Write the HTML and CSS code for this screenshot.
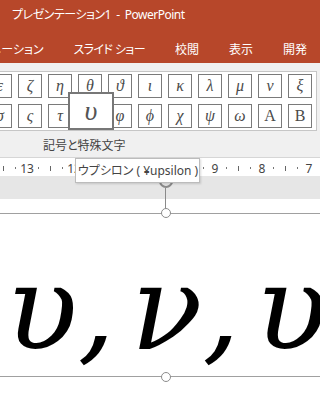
FILE: index.html
```html
<!DOCTYPE html>
<html lang="ja">
<head>
  <meta charset="UTF-8">
  <meta name="viewport" content="width=device-width, initial-scale=1.0">
  <title>プレゼンテーション1 - PowerPoint</title>
  <link rel="stylesheet" href="styles.css">
</head>
<body>
  <div class="titlebar">
    <div class="title">プレゼンテーション1&nbsp; - &nbsp;PowerPoint</div>
    <div class="tabs">
      <span>アニメーション</span>
      <span>スライド ショー</span>
      <span>校閲</span>
      <span>表示</span>
      <span>開発</span>
    </div>
  </div>

  <div class="ribbon">
    <div class="gallery">
      <div class="symbols">
        <span class="sym">ε</span>
        <span class="sym">ζ</span>
        <span class="sym">η</span>
        <span class="sym">θ</span>
        <span class="sym">ϑ</span>
        <span class="sym">ι</span>
        <span class="sym">κ</span>
        <span class="sym">λ</span>
        <span class="sym">μ</span>
        <span class="sym">ν</span>
        <span class="sym">ξ</span>

        <span class="sym">σ</span>
        <span class="sym">ς</span>
        <span class="sym">τ</span>
        <span class="sym">υ</span>
        <span class="sym">φ</span>
        <span class="sym">ϕ</span>
        <span class="sym">χ</span>
        <span class="sym">ψ</span>
        <span class="sym">ω</span>
        <span class="sym up">Α</span>
        <span class="sym up">Β</span>
      </div>
      <div class="sym-hover">υ</div>
    </div>
    <div class="group-label">記号と特殊文字</div>
  </div>

  <div class="ruler">
    <span class="tick"></span><span class="dot"></span><span class="num">13</span><span class="dot"></span>
    <span class="tick"></span><span class="dot"></span><span class="num">12</span><span class="dot"></span>
    <span class="tick"></span><span class="dot"></span><span class="num">11</span><span class="dot"></span>
    <span class="tick"></span><span class="dot"></span><span class="num">10</span><span class="dot"></span>
    <span class="tick"></span><span class="dot"></span><span class="num">9</span><span class="dot"></span>
    <span class="tick"></span><span class="dot"></span><span class="num">8</span><span class="dot"></span>
    <span class="tick"></span><span class="dot"></span><span class="num">7</span><span class="dot"></span>
  </div>

  <div class="canvas-top">
    <svg class="rotate" width="18" height="16" viewBox="0 0 18 16">
      <path d="M3 6 A6 6 0 1 0 15 6" fill="none" stroke="#8a8a8a" stroke-width="2"/>
      <path d="M13 4 L17 5 L15 8" fill="none" stroke="#8a8a8a" stroke-width="1.5"/>
    </svg>
    <div class="rotate-stem"></div>
  </div>

  <div class="slide">
    <div class="textbox">
      <span class="handle handle-top"></span>
      <div class="math">υ, ν, υ</div>
      <span class="handle handle-bottom"></span>
    </div>
  </div>

  <div class="tooltip">ウプシロン ( ¥upsilon )</div>
</body>
</html>
```

FILE: styles.css
```css
body {
  margin: 0;
  width: 320px;
  height: 400px;
  overflow: hidden;
  position: relative;
  font-family: "Noto Sans", "Noto Sans CJK JP", sans-serif;
  font-feature-settings: "palt";
  background: #fff;
}
.titlebar {
  background: #B7472A;
  color: #fff;
  height: 63px;
  font-size: 12px;
}
.title {
  height: 30px;
  line-height: 30px;
  padding-left: 12px;
  letter-spacing: -0.5px;
  white-space: nowrap;
}
.tabs {
  display: flex;
  justify-content: flex-end;
  align-items: center;
  gap: 30px;
  height: 28px;
  padding-top: 5px;
  padding-right: 13px;
  white-space: nowrap;
}
.tabs span:nth-child(2) {
  letter-spacing: -0.6px;
}
.ribbon {
  background: #f0f0f0;
  padding-top: 8px;
  border-bottom: 1px solid #d6d6d6;
}
.gallery {
  position: relative;
  margin-left: -20px;
  width: 337px;
  box-sizing: border-box;
  background: #fff;
  border: 1px solid #c6c6c6;
  padding: 2px 0 2px 7px;
}
.symbols {
  display: grid;
  grid-template-columns: repeat(11, 24px);
  gap: 6px;
}
.sym {
  box-sizing: border-box;
  width: 24px;
  height: 24px;
  border: 1px solid #7a7a7a;
  display: flex;
  align-items: center;
  justify-content: center;
  font-family: "Liberation Serif", serif;
  font-style: italic;
  font-size: 16px;
  color: #4a4a4a;
}
.sym.up {
  font-style: normal;
}
.sym-hover {
  position: absolute;
  left: 87px;
  top: 20px;
  width: 46px;
  height: 38px;
  box-sizing: border-box;
  background: #fff;
  border: 2px solid #777;
  display: flex;
  align-items: center;
  justify-content: center;
  font-family: "Liberation Serif", serif;
  font-style: italic;
  font-size: 28px;
  color: #555;
}
.group-label {
  height: 22px;
  line-height: 22px;
  padding-top: 4px;
  padding-left: 43px;
  font-size: 12px;
  color: #444;
}
.ruler {
  display: flex;
  align-items: center;
  height: 18px;
  margin-left: -2.375px;
  background: #fff;
  color: #444;
  font-size: 12px;
}
.ruler span {
  flex: 0 0 11.75px;
  min-width: 0;
  display: flex;
  justify-content: center;
  align-items: center;
  height: 18px;
  padding-top: 2px;
  box-sizing: border-box;
  white-space: nowrap;
}
.dot::before {
  content: "";
  width: 1px;
  height: 2px;
  background: #777;
}
.tick::before {
  content: "";
  width: 1px;
  height: 5px;
  background: #666;
}
.canvas-top {
  position: relative;
  height: 23px;
  background: #e6e6e6;
}
.rotate {
  position: absolute;
  left: 157px;
  top: -1px;
}
.rotate-stem {
  position: absolute;
  left: 165px;
  top: 12px;
  width: 1px;
  height: 11px;
  background: #8a8a8a;
}
.slide {
  padding-top: 14px;
  background: #fff;
}
.textbox {
  position: relative;
  height: 162px;
  border-top: 1px solid #a0a0a0;
  border-bottom: 1px solid #a0a0a0;
}
.textbox::before {
  content: "";
  position: absolute;
  left: 165px;
  top: -15px;
  width: 1px;
  height: 11px;
  background: #8a8a8a;
}
.handle {
  position: absolute;
  left: 161px;
  width: 8px;
  height: 8px;
  border: 1.5px solid #8c8c8c;
  border-radius: 50%;
  background: #fff;
  z-index: 1;
}
.handle-top {
  top: -6px;
}
.handle-bottom {
  bottom: -6px;
}
.math {
  padding-top: 25px;
  padding-left: 6px;
  white-space: nowrap;
  font-family: "DejaVu Serif", serif;
  font-style: italic;
  font-size: 118px;
  word-spacing: -22px;
  color: #000;
}
.tooltip {
  position: absolute;
  left: 75px;
  top: 158px;
  width: 125px;
  height: 25px;
  box-sizing: border-box;
  padding-left: 2px;
  line-height: 23px;
  background: #fff;
  border: 1px solid #bcbcbc;
  box-shadow: 1px 1px 2px rgba(0, 0, 0, 0.15);
  font-size: 12px;
  color: #444;
  white-space: nowrap;
}
```
